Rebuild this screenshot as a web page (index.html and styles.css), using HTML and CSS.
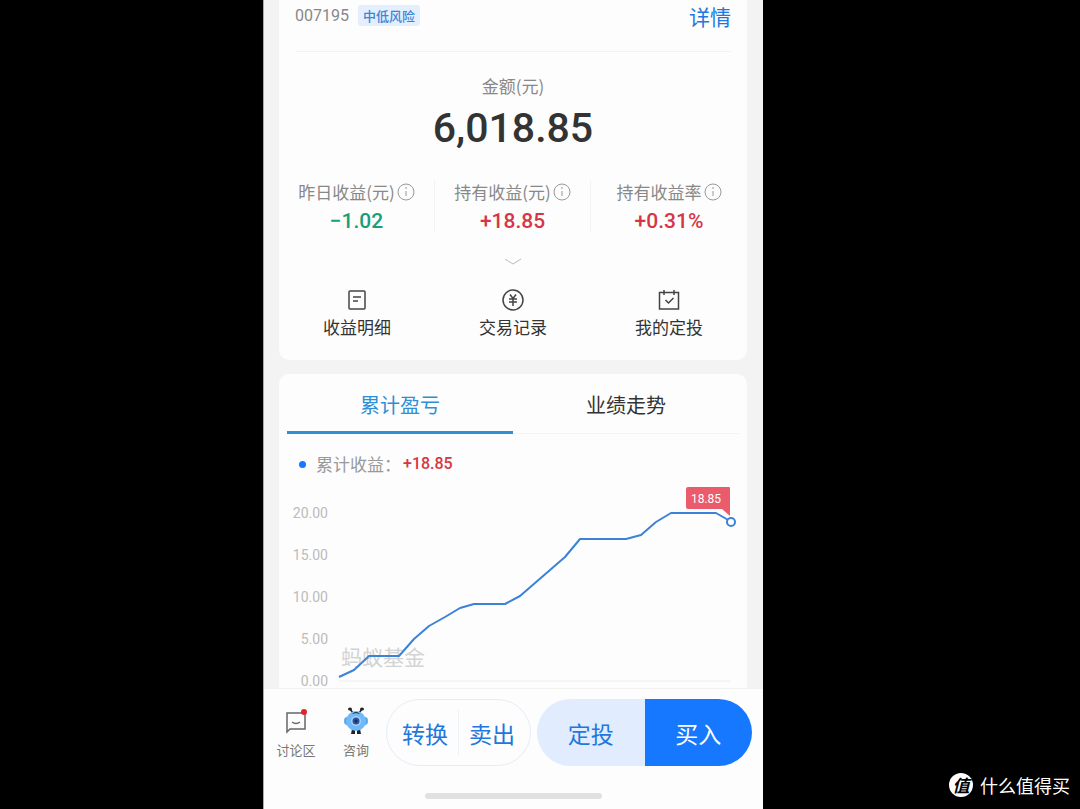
FILE: index.html
```html
<!DOCTYPE html>
<html lang="zh-CN">

<head>
    <meta charset="UTF-8">
    <meta name="viewport" content="width=device-width, initial-scale=1.0">
    <title>基金持有详情</title>
    <link rel="stylesheet" href="styles.css">
</head>

<body>
    <div class="stage">
        <div class="phone">
            <main class="content">
                <section class="card summary">
                    <div class="fund-head">
                        <span class="fund-code">007195</span>
                        <span class="risk-tag">中低风险</span>
                        <a class="detail-link" href="#">详情</a>
                    </div>

                    <div class="amount">
                        <div class="amount-label">金额(元)</div>
                        <div class="amount-value">6,018.85</div>
                    </div>

                    <div class="stats">
                        <div class="stat">
                            <div class="stat-label">昨日收益(元)
                                <svg class="info" viewBox="0 0 18 18"><circle cx="9" cy="9" r="8"/><path d="M9 8v5M9 4v2"/></svg>
                            </div>
                            <div class="stat-value green">−1.02</div>
                        </div>
                        <div class="stat">
                            <div class="stat-label">持有收益(元)
                                <svg class="info" viewBox="0 0 18 18"><circle cx="9" cy="9" r="8"/><path d="M9 8v5M9 4v2"/></svg>
                            </div>
                            <div class="stat-value red">+18.85</div>
                        </div>
                        <div class="stat">
                            <div class="stat-label">持有收益率
                                <svg class="info" viewBox="0 0 18 18"><circle cx="9" cy="9" r="8"/><path d="M9 8v5M9 4v2"/></svg>
                            </div>
                            <div class="stat-value red">+0.31%</div>
                        </div>
                    </div>

                    <button class="expand" aria-label="展开">
                        <svg width="18" height="8" viewBox="0 0 18 8"><path d="M1 1l8 5 8-5"/></svg>
                    </button>

                    <nav class="links">
                        <a href="#">
                            <svg width="24" height="24" viewBox="0 0 24 24"><rect x="4" y="3" width="16" height="18" rx="1"/><path d="M8 9h8M8 13h5"/></svg>
                            收益明细
                        </a>
                        <a href="#">
                            <svg width="24" height="24" viewBox="0 0 24 24"><circle cx="12" cy="12" r="10"/><path d="M9 6.500l3 4 3-4M8 11h8M8 14h8M12 11v7"/></svg>
                            交易记录
                        </a>
                        <a href="#">
                            <svg width="24" height="24" viewBox="0 0 24 24"><path d="M2.500 4.500h19v16.500h-19zM7 2v5M17 2v5M8.500 12l3 3 5-5"/></svg>
                            我的定投
                        </a>
                    </nav>
                </section>

                <section class="card trend">
                    <div class="tabs">
                        <button class="tab active">累计盈亏</button>
                        <button class="tab">业绩走势</button>
                    </div>

                    <div class="legend">
                        <span class="dot"></span>
                        <span>累计收益：</span>
                        <span class="legend-value">+18.85</span>
                    </div>

                    <svg class="chart" viewBox="0 0 468 210">
                        <g class="axis">
                            <text x="49" y="33">20.00</text>
                            <text x="49" y="75">15.00</text>
                            <text x="49" y="117">10.00</text>
                            <text x="49" y="159">5.00</text>
                            <text x="49" y="201">0.00</text>
                        </g>
                        <path class="baseline" d="M60 196H452"/>
                        <text class="mark" x="62" y="180">蚂蚁基金</text>
                        <polyline class="line" points="60,192 75,185 90,171 120,171 135,154 150,141 166,132 181,123 195,119 226,119 241,111 256,98 271,85 286,72 301,54 347,54 362,50 377,37 392,28 437,28 451,36"/>
                        <path class="flag" d="M409 2h41q1 0 1 1v28l-8-7h-34q-2 0-2-2v-18q0-2 2-2z"/>
                        <text class="flag-text" x="427" y="18">18.85</text>
                        <circle class="point" cx="452" cy="37" r="4"/>
                    </svg>
                </section>
            </main>

            <footer class="bottom">
                <div class="actions">
                    <a class="tool discuss" href="#">
                        <svg width="30" height="30" viewBox="0 0 30 30">
                            <path class="bubble" d="M6 7h18v16H9l-3 3zM11 16q4 3 8 0"/>
                            <circle cx="23" cy="6" r="3" fill="#e0242f"/>
                        </svg>
                        讨论区
                    </a>
                    <a class="tool" href="#">
                        <svg width="30" height="30" viewBox="0 0 30 30">
                            <path d="M12 7L9 3M18 7l3-4" stroke="#222" stroke-width="1.500"/>
                            <ellipse cx="9" cy="3" rx="2" ry="1.500" fill="#222"/>
                            <ellipse cx="21" cy="3" rx="2" ry="1.500" fill="#222"/>
                            <path d="M11 23h3v5h-4zM16 23h3l1 5h-4z" fill="#222"/>
                            <ellipse cx="6" cy="15" rx="3" ry="4" fill="#5aa9ef"/>
                            <ellipse cx="24" cy="15" rx="3" ry="4" fill="#5aa9ef"/>
                            <circle cx="15" cy="15" r="10" fill="#70b9f8"/>
                            <path d="M11 8q4-4 8 0l-4-1z" fill="#222"/>
                            <circle cx="15" cy="15" r="5" fill="#a9d2fb"/>
                            <circle cx="15" cy="15" r="3.500" fill="#2c529a"/>
                            <circle cx="15" cy="15" r="1.500" fill="#16305f"/>
                        </svg>
                        咨询
                    </a>
                    <div class="pill outline">
                        <button>转换</button>
                        <button>卖出</button>
                    </div>
                    <div class="pill solid">
                        <button class="plan">定投</button>
                        <button class="buy">买入</button>
                    </div>
                </div>
                <div class="home-bar"></div>
            </footer>
        </div>

        <div class="brand">
            <span class="brand-logo">值</span>
            <span>什么值得买</span>
        </div>
    </div>
</body>

</html>
```

FILE: styles.css
```css
* {
    box-sizing: border-box;
}

body {
    margin: 0;
    background-color: #000;
    color: #333;
    font-family: "Noto Sans CJK SC", sans-serif;
}

a {
    color: inherit;
    text-decoration: none;
}

button {
    padding: 0;
    border: none;
    background: none;
    color: inherit;
    font: inherit;
    cursor: pointer;
}

svg {
    fill: none;
}

/* the phone screen sits a little left of the middle */
.stage {
    display: grid;
    grid-template-columns: 263fr 500fr 317fr;
    height: 100vh;
}

.phone {
    grid-column: 2;
    display: flex;
    flex-direction: column;
    min-width: 0;
    min-height: 0;
    border-left: 1px solid #aaa;
    background-color: #f3f3f3;
}

.content {
    flex: 1;
    min-height: 0;
    padding: 0 16px 0 15px;
    overflow: hidden;
}

.card {
    background-color: #fdfdfd;
    border-radius: 10px;
}

.summary {
    padding-bottom: 21px;
    border-radius: 0 0 10px 10px;
}

.fund-head {
    display: flex;
    align-items: center;
    height: 52px;
    margin: 0 16px;
    padding-bottom: 20px;
    border-bottom: 1px solid #f3f3f3;
}

.fund-code {
    color: #888;
    font: 16px/16px Roboto, sans-serif;
}

.risk-tag {
    margin-left: 9px;
    padding: 0 5px;
    border-radius: 3px;
    background-color: #e3effd;
    color: #3d84d8;
    font-size: 13px;
    font-weight: 500;
    line-height: 21px;
}

.detail-link {
    margin-left: auto;
    color: #2277dc;
    font-size: 21px;
}

.amount {
    padding-top: 22px;
    text-align: center;
}

.amount-label {
    color: #888;
    font-size: 17px;
    line-height: 24px;
}

.amount-value {
    font: 500 41px/60px Roboto, sans-serif;
}

.stats,
.links {
    display: grid;
    grid-template-columns: repeat(3, 1fr);
}

.stats {
    padding-top: 22px;
}

.stat {
    height: 52px;
    border-right: 1px solid #f3f3f3;
    text-align: center;
}

.stat:last-child {
    border-right: none;
}

.stat-label {
    display: flex;
    align-items: center;
    justify-content: center;
    gap: 2px;
    color: #888;
    font-size: 17px;
    line-height: 24px;
    white-space: nowrap;
}

.info {
    width: 18px;
    height: 18px;
    stroke: #999;
}

.stat-value {
    font: 500 21px/34px Roboto, sans-serif;
}

.green {
    color: #1b9d77;
}

.red {
    color: #d63545;
}

.expand {
    display: block;
    margin: 20px auto 0;
    height: 16px;
    line-height: 8px;
    stroke: #bbb;
}

.links {
    padding-top: 20px;
}

.links a {
    display: flex;
    flex-direction: column;
    align-items: center;
    gap: 3px;
    font-size: 17px;
    line-height: 24px;
}

.links svg {
    stroke: #444;
    stroke-width: 1.5;
}

.trend {
    margin-top: 14px;
}

.tabs {
    display: grid;
    grid-template-columns: 1fr 1fr;
    margin: 0 8px;
}

.tab {
    height: 60px;
    box-shadow: inset 0 -1px #f3f3f3;
    font-size: 20px;
}

.tab.active {
    box-shadow: inset 0 -3px #2d8fd5;
    color: #2d8fd5;
}

.legend {
    display: flex;
    align-items: center;
    padding: 18px 20px 9px;
    color: #999;
    font-size: 17px;
    line-height: 24px;
}

.dot {
    width: 7px;
    height: 7px;
    margin-right: 10px;
    border-radius: 50%;
    background-color: #1677ff;
}

.legend-value {
    margin-left: 2px;
    color: #d63545;
    font: 500 16px/24px Roboto, sans-serif;
}

.chart {
    display: block;
    width: 100%;
}

.axis {
    fill: #bbb;
    font: 14px Roboto, sans-serif;
    text-anchor: end;
}

.baseline {
    stroke: #eee;
}

.mark {
    fill: #d3d3d3;
    font-size: 21px;
}

.line {
    stroke: #3b82d9;
    stroke-width: 2;
    stroke-linejoin: round;
}

.flag {
    fill: #ea5c6b;
}

.flag-text {
    fill: #fff;
    font: 12px Roboto, sans-serif;
    text-anchor: middle;
}

.point {
    fill: #fff;
    stroke: #3b82d9;
    stroke-width: 2;
}

.bottom {
    padding: 10px 11px;
    border-top: 1px solid #f1f1f1;
    background-color: #fdfdfd;
}

.actions {
    display: grid;
    grid-template-columns: 51fr 60fr 145fr 221fr;
    align-items: center;
}

.tool {
    display: flex;
    flex-direction: column;
    align-items: center;
    gap: 4px;
    color: #777;
    font-size: 13px;
    line-height: 20px;
    white-space: nowrap;
}

.discuss {
    padding-right: 9px;
}

.bubble {
    stroke: #666;
    stroke-width: 1.5;
}

.pill {
    display: flex;
    height: 67px;
    border-radius: 34px;
    overflow: hidden;
    font-size: 23px;
}

.pill button {
    flex: 1;
}

.outline {
    padding: 0 5px;
    border: 1px solid #e3edf8;
    color: #2277dc;
}

.outline button {
    height: 45px;
    align-self: center;
}

.outline button + button {
    border-left: 1px solid #edf2f8;
}

.solid {
    margin-left: 6px;
}

.plan {
    background-color: #e1edfe;
    color: #2277dc;
}

.buy {
    background-color: #1677ff;
    color: #fff;
}

.home-bar {
    width: 37%;
    height: 6px;
    margin: 27px auto 0;
    border-radius: 3px;
    background-color: #e1e1e1;
}

.brand {
    display: flex;
    align-items: center;
    align-self: end;
    justify-content: flex-end;
    gap: 7px;
    padding: 0 10px 11px 0;
    color: #fff;
    font-size: 18px;
    line-height: 26px;
}

.brand-logo {
    width: 24px;
    height: 24px;
    border-radius: 50%;
    background-color: #fff;
    color: #000;
    font-size: 17px;
    font-weight: 700;
    font-style: italic;
    line-height: 24px;
    text-align: center;
}
```
